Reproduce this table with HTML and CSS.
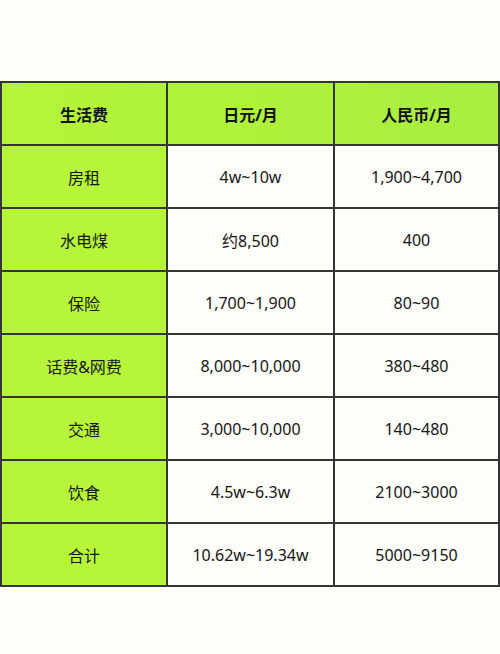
FILE: index.html
```html
<!DOCTYPE html>
<html lang="zh">
<head>
<meta charset="utf-8">
<link rel="stylesheet" href="styles.css">
</head>
<body>
<div class="table">
  <div class="cell head">生活费</div>
  <div class="cell head">日元/月</div>
  <div class="cell head">人民币/月</div>

  <div class="cell label">房租</div>
  <div class="cell">4w~10w</div>
  <div class="cell">1,900~4,700</div>

  <div class="cell label">水电煤</div>
  <div class="cell">约8,500</div>
  <div class="cell">400</div>

  <div class="cell label">保险</div>
  <div class="cell">1,700~1,900</div>
  <div class="cell">80~90</div>

  <div class="cell label">话费&amp;网费</div>
  <div class="cell">8,000~10,000</div>
  <div class="cell">380~480</div>

  <div class="cell label">交通</div>
  <div class="cell">3,000~10,000</div>
  <div class="cell">140~480</div>

  <div class="cell label">饮食</div>
  <div class="cell">4.5w~6.3w</div>
  <div class="cell">2100~3000</div>

  <div class="cell label">合计</div>
  <div class="cell">10.62w~19.34w</div>
  <div class="cell">5000~9150</div>
</div>
</body>
</html>
```
FILE: styles.css
```css
html, body {
  margin: 0;
  padding: 0;
  background: #fdfdfa;
}
body {
  width: 500px;
  height: 654px;
  font-family: "Noto Sans", "Noto Sans CJK SC", sans-serif;
  color: #161616;
  font-size: 16px;
}
.table {
  margin-top: 81px;
  display: grid;
  grid-template-columns: 166px 167px 165px;
  grid-auto-rows: 63px;
  border-top: 2px solid #353535;
  border-left: 2px solid #353535;
  box-sizing: border-box;
  width: 500px;
  background: #fdfdfa;
}
.cell {
  display: flex;
  align-items: center;
  justify-content: center;
  border-right: 2px solid #353535;
  border-bottom: 2px solid #353535;
}
.head {
  font-weight: bold;
  font-size: 16px;
  color: #111;
  background: #b0f33c;
}
.head:nth-child(1) { background: linear-gradient(90deg, #b4f53a, #b1f33b); }
.head:nth-child(2) { background: linear-gradient(90deg, #b1f33b, #adf13d); }
.head:nth-child(3) { background: linear-gradient(90deg, #adf13d, #a7ee42); }
.label {
  background: #b6f53a;
}
```
